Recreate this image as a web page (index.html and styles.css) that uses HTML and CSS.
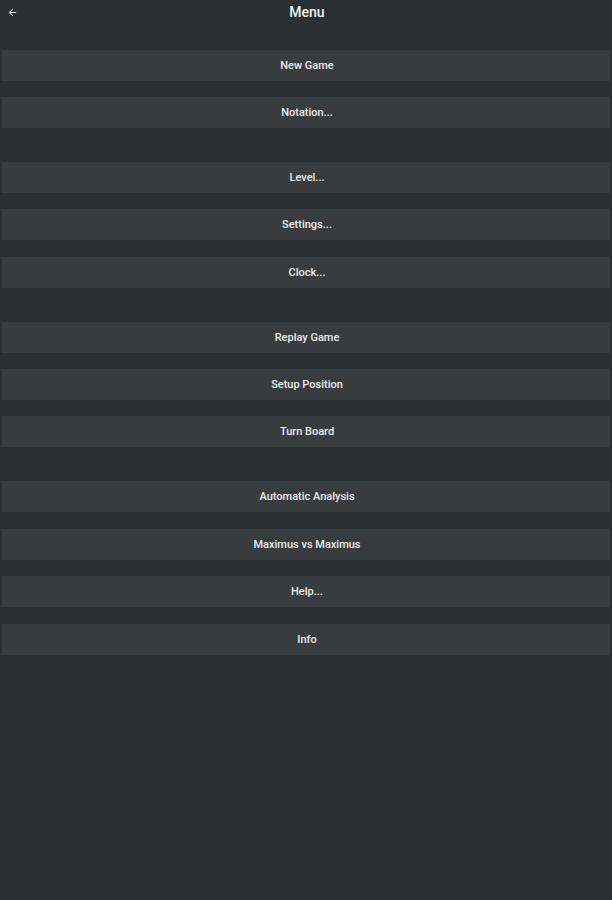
FILE: index.html
```html
<!DOCTYPE html>
<html>
<head>
<meta charset="utf-8">
<link rel="stylesheet" href="styles.css">
</head>
<body>
<header class="bar">
  <svg class="back" viewBox="0 0 24 24" width="11" height="11"><path d="M20 11H7.83l5.59-5.59L12 4l-8 8 8 8 1.41-1.41L7.83 13H20v-2z" fill="#e8e8e8"/></svg>
  <h1 class="title">Menu</h1>
</header>
<main class="menu">
  <section class="group">
    <div class="item">New Game</div>
    <div class="item">Notation...</div>
  </section>
  <section class="group">
    <div class="item">Level...</div>
    <div class="item">Settings...</div>
    <div class="item">Clock...</div>
  </section>
  <section class="group">
    <div class="item">Replay Game</div>
    <div class="item">Setup Position</div>
    <div class="item">Turn Board</div>
  </section>
  <section class="group">
    <div class="item">Automatic Analysis</div>
    <div class="item">Maximus vs Maximus</div>
    <div class="item">Help...</div>
    <div class="item">Info</div>
  </section>
</main>
</body>
</html>
```
FILE: styles.css
```css
html, body {
  margin: 0;
  padding: 0;
  background: #293033;
  height: 900px;
  font-family: Roboto, "Liberation Sans", sans-serif;
}
.bar {
  position: relative;
  height: 24px;
  display: flex;
  align-items: center;
  justify-content: center;
  padding-left: 2px;
}
.back {
  position: absolute;
  left: 7px;
  top: 7px;
}
.title {
  margin: 0;
  font-size: 14px;
  font-weight: 500;
  color: #f0f0f0;
}
.menu {
  padding: 25.5px 2px 0 2px;
  display: flex;
  flex-direction: column;
  gap: 34px;
}
.group {
  display: flex;
  flex-direction: column;
  gap: 16.4px;
}
.item {
  height: 31px;
  background: #383c3f;
  color: #ececec;
  font-size: 11px;
  font-weight: 500;
  display: flex;
  align-items: center;
  justify-content: center;
  padding-left: 2px;
}
```
